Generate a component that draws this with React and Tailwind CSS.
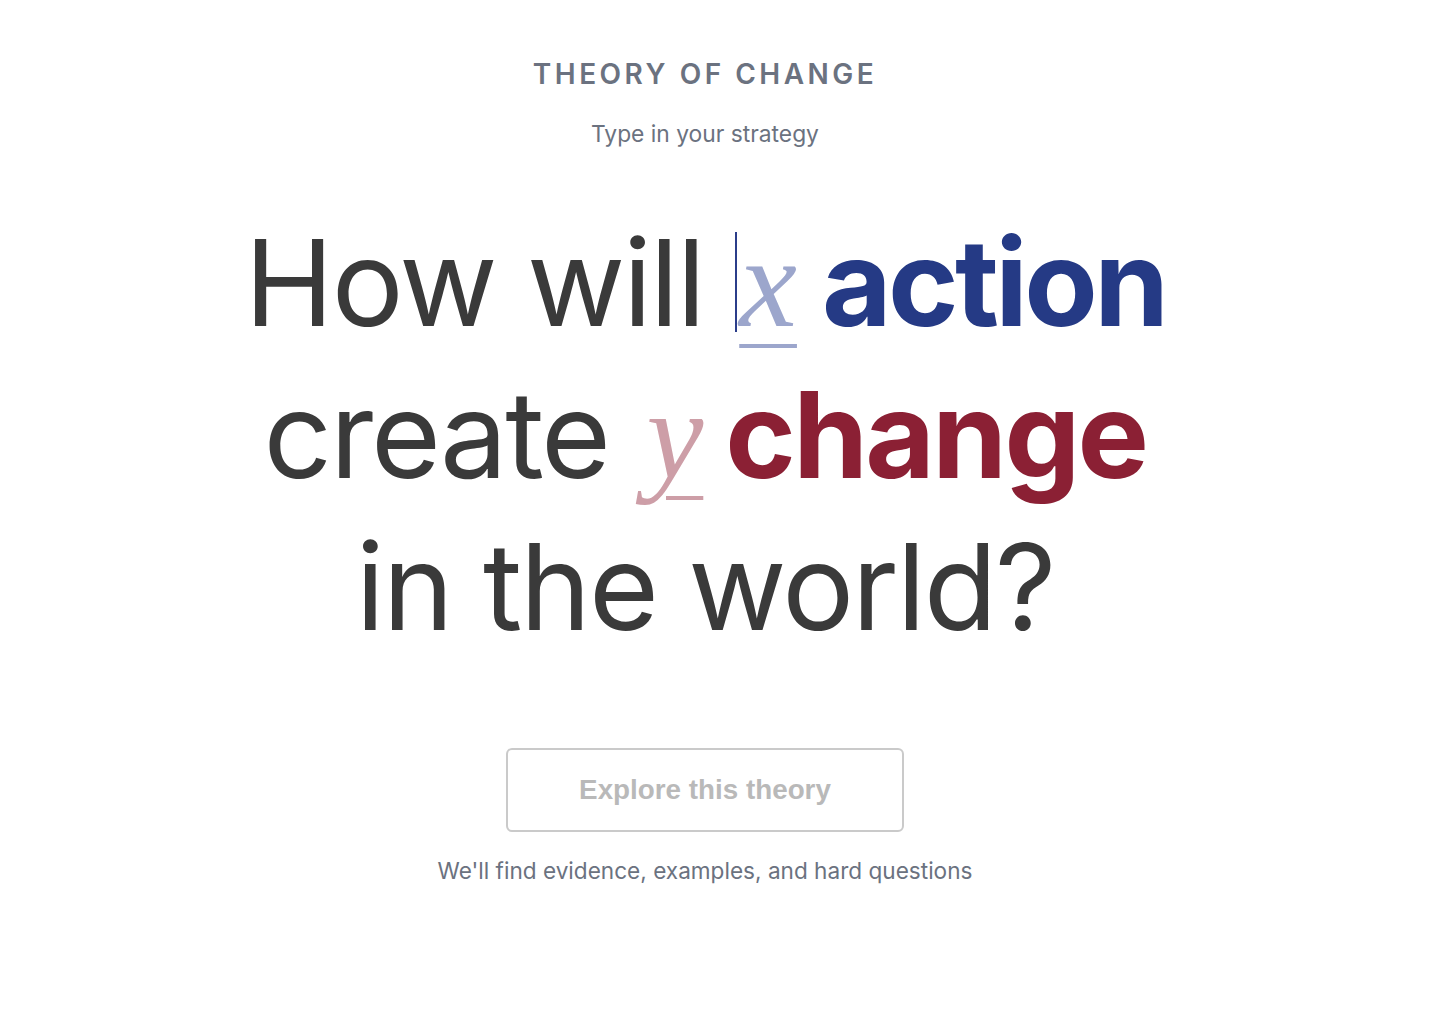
import React from "react";

const inter = { fontFamily: "Inter, 'Noto Sans', sans-serif" };
const mathSerif = { fontFamily: "'Liberation Serif', 'DejaVu Serif', serif" };

export default function App() {
  return (
    <div className="min-h-screen w-full bg-white" style={inter}>
      <div className="w-[1410px] flex flex-col items-center text-center">
        {/* Eyebrow */}
        <div className="mt-[57px] text-[28px] leading-[34px] font-semibold tracking-[0.125em] text-[#6b7280]">
          THEORY OF CHANGE
        </div>
        <div className="mt-[29px] text-[22.8px] leading-[28px] text-[#6b7280]">
          Type in your strategy
        </div>

        {/* Headline */}
        <h1 className="mt-[59px] text-[120px] leading-[152px] font-normal text-[#3a3a3a] tracking-[-0.018em]">
          <span>How will </span>
          <span className="inline-block w-[2px] h-[100px] bg-[#2b3d8a] align-[-6px]"></span>
          <span
            className="ml-[2px] italic text-[#9ca6cc] text-[130px] leading-none tracking-normal underline decoration-[4px] underline-offset-[18px]"
            style={mathSerif}
          >
            x
          </span>
          <span className="ml-[25px] font-bold text-[#253a85] tracking-[-0.03em]">action</span>
          <br />
          <span>create </span>
          <span
            className="ml-[6px] italic text-[#cd9ea7] text-[128px] leading-none tracking-normal underline decoration-[4px] underline-offset-[18px]"
            style={mathSerif}
          >
            y
          </span>
          <span className="ml-[22px] font-bold text-[#8b2034] tracking-[-0.022em]">change</span>
          <br />
          <span>in the world?</span>
        </h1>

        {/* CTA */}
        <button
          type="button"
          className="mt-[85px] w-[398px] h-[84px] rounded-md border-2 border-[#cacaca] bg-white text-[27.8px] font-bold text-[#b9b9b9]"
          style={{ fontFamily: "'Liberation Sans', Arial, sans-serif" }}
        >
          Explore this theory
        </button>
        <p className="mt-[25px] text-[22.6px] leading-[28px] text-[#6b7280]">
          We'll find evidence, examples, and hard questions
        </p>
      </div>
    </div>
  );
}
